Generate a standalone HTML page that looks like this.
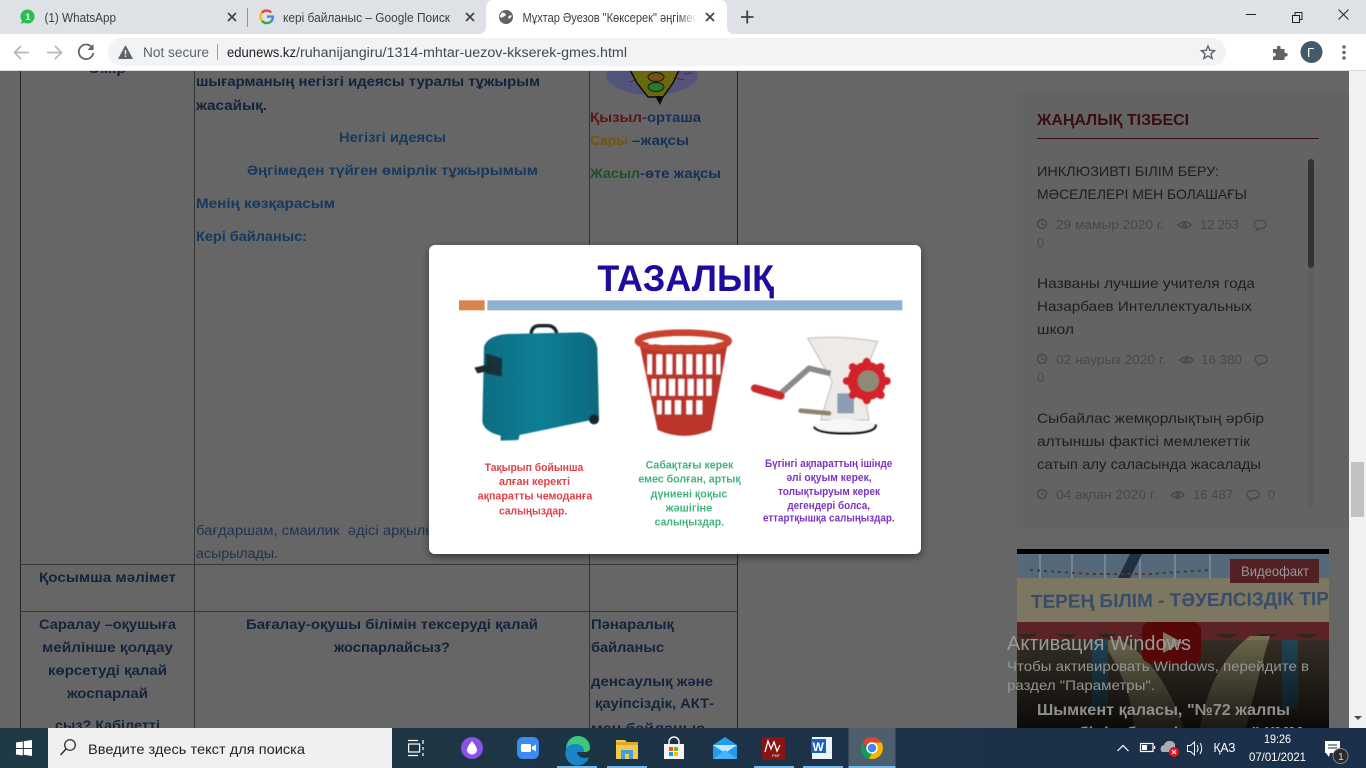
<!DOCTYPE html>
<html><head><meta charset="utf-8"><title>Мұхтар Әуезов</title>
<style>
html,body{margin:0;padding:0;width:1366px;height:768px;overflow:hidden;background:#666}
svg{display:block;position:absolute;left:0;top:0}
text{font-family:"Liberation Sans","DejaVu Sans",sans-serif;white-space:pre}
.b{font-weight:700;font-size:14px}
.r{font-size:14px}
.n{fill:#14233c}.m{fill:#143a60}
.s{font-size:14px;fill:#1e1e1e}
.g{font-size:13px;fill:#484848}
.c{font-size:12.5px;fill:#3c4043}
</style></head><body>
<svg width="1366" height="768" viewBox="0 0 1366 768" xmlns="http://www.w3.org/2000/svg">
<defs>
<linearGradient id="fade" x1="0" x2="1"><stop offset="0" stop-color="#fff" stop-opacity="0"/><stop offset=".8" stop-color="#fff"/></linearGradient>
<linearGradient id="tb" x1="0" x2="1"><stop offset="0" stop-color="#1f3a44"/><stop offset=".5" stop-color="#1d3345"/><stop offset="1" stop-color="#1b2f4b"/></linearGradient>
<linearGradient id="dark" x1="0" x2="0" y1="0" y2="1"><stop offset="0" stop-color="#000" stop-opacity=".1"/><stop offset="1" stop-color="#000" stop-opacity=".8"/></linearGradient>
<linearGradient id="suit" x1="0" x2="1"><stop offset="0" stop-color="#0d6d82"/><stop offset=".5" stop-color="#107f96"/><stop offset="1" stop-color="#0b687d"/></linearGradient>
<filter id="bl"><feGaussianBlur stdDeviation="1.2"/></filter>
<filter id="bt"><feGaussianBlur stdDeviation=".7"/></filter>
<filter id="sh" x="-5%" y="-5%" width="110%" height="115%"><feDropShadow dx="0" dy="3" stdDeviation="4" flood-color="#000" flood-opacity=".45"/></filter>
<clipPath id="vid"><rect x="1017" y="549" width="312" height="179"/></clipPath>
</defs>

<!-- page -->
<rect width="1366" height="768" fill="#666"/>
<g stroke="#222" stroke-width="1">
<path d="M20.5 70V728M737.5 70V728"/>
<path d="M194.5 70V728M589.5 70V728" stroke="#333"/>
<path d="M20 564.5H738M20 611.5H738" stroke="#363636"/>
</g>
<text class="b n" x="88" y="73" textLength="38" lengthAdjust="spacingAndGlyphs">Өмір</text>
<text class="b n" x="196" y="86" textLength="344" lengthAdjust="spacingAndGlyphs">шығарманың негізгі идеясы туралы тұжырым</text>
<text class="b n" x="196" y="110" textLength="71" lengthAdjust="spacingAndGlyphs">жасайық.</text>
<text class="b m" x="339" y="142" textLength="107" lengthAdjust="spacingAndGlyphs">Негізгі идеясы</text>
<text class="b m" x="247" y="175" textLength="291" lengthAdjust="spacingAndGlyphs">Әңгімеден түйген өмірлік тұжырымым</text>
<text class="b m" x="196" y="208" textLength="139" lengthAdjust="spacingAndGlyphs">Менің көзқарасым</text>
<text class="b m" x="196" y="241" textLength="111" lengthAdjust="spacingAndGlyphs">Кері байланыс:</text>
<text class="r" fill="#20344f" x="196" y="535" textLength="240" lengthAdjust="spacingAndGlyphs">бағдаршам, смаилик  әдісі арқылы</text>
<text class="r" fill="#20344f" x="196" y="558" textLength="82" lengthAdjust="spacingAndGlyphs">асырылады.</text>
<text class="b n" x="39" y="582" textLength="137" lengthAdjust="spacingAndGlyphs">Қосымша мәлімет</text>
<text class="b n" x="39" y="629" textLength="137" lengthAdjust="spacingAndGlyphs">Саралау –оқушыға</text>
<text class="b n" x="42" y="652" textLength="131" lengthAdjust="spacingAndGlyphs">мейлінше қолдау</text>
<text class="b n" x="48" y="675" textLength="119" lengthAdjust="spacingAndGlyphs">көрсетуді қалай</text>
<text class="b n" x="67" y="698" textLength="81" lengthAdjust="spacingAndGlyphs">жоспарлай</text>
<text class="b n" x="55" y="730" textLength="105" lengthAdjust="spacingAndGlyphs">сыз? Қабілетті</text>
<text class="b n" x="246" y="629" textLength="292" lengthAdjust="spacingAndGlyphs">Бағалау-оқушы білімін тексеруді қалай</text>
<text class="b n" x="334" y="652" textLength="116" lengthAdjust="spacingAndGlyphs">жоспарлайсыз?</text>
<!-- traffic light -->
<ellipse cx="652" cy="75" rx="46" ry="20" fill="#54547a"/>
<path d="M637 80l-8 2M676 78l8 2M684 74l8-1" stroke="#6a2228" stroke-width="1"/>
<path d="M629 68H680L673 83L663 97H648L637 83Z" fill="#6b6910" stroke="#0c0c0c" stroke-width="1.500"/>
<ellipse cx="656" cy="77" rx="8" ry="4.500" fill="#7a4d10" stroke="#1a1a1a"/>
<ellipse cx="656" cy="87" rx="8" ry="4.500" fill="#25792b" stroke="#1a1a1a"/>
<path d="M655 96H664L660 105Z" fill="#0c0c0c"/>
<text class="b" x="590" y="122" textLength="52" lengthAdjust="spacingAndGlyphs" fill="#5e1414">Қызыл</text>
<text class="b" x="642" y="122" textLength="59" lengthAdjust="spacingAndGlyphs" fill="#14305a">-орташа</text>
<text class="b" x="590" y="145" textLength="38" lengthAdjust="spacingAndGlyphs" fill="#6e560a">Сары</text>
<text class="b" x="632" y="145" textLength="57" lengthAdjust="spacingAndGlyphs" fill="#14305a">–жақсы</text>
<text class="b" x="590" y="178" textLength="50" lengthAdjust="spacingAndGlyphs" fill="#1f5029">Жасыл</text>
<text class="b" x="640" y="178" textLength="81" lengthAdjust="spacingAndGlyphs" fill="#14305a">-өте жақсы</text>
<text class="b n" x="591" y="629" textLength="83" lengthAdjust="spacingAndGlyphs">Пәнаралық</text>
<text class="b n" x="591" y="652" textLength="73" lengthAdjust="spacingAndGlyphs">байланыс</text>
<text class="b n" x="591" y="686" textLength="122" lengthAdjust="spacingAndGlyphs">денсаулық және</text>
<text class="b n" x="595" y="708" textLength="119" lengthAdjust="spacingAndGlyphs">қауіпсіздік, АКТ-</text>
<text class="b n" x="591" y="733" textLength="114" lengthAdjust="spacingAndGlyphs">мен байланыс</text>

<!-- sidebar -->
<rect x="1017" y="93" width="332" height="435" fill="#636363"/>
<text x="1037" y="125" font-size="15.500" font-weight="700" fill="#3a0e10" textLength="152" lengthAdjust="spacingAndGlyphs">ЖАҢАЛЫҚ ТІЗБЕСІ</text>
<rect x="1037" y="138" width="282" height="1" fill="#3a0e10"/>
<rect x="1308" y="159" width="6" height="349" rx="3" fill="#5e5e5e"/>
<rect x="1308" y="159" width="6" height="109" rx="3" fill="#333"/>
<text class="s" x="1037" y="176" textLength="182" lengthAdjust="spacingAndGlyphs">ИНКЛЮЗИВТІ БІЛІМ БЕРУ:</text>
<text class="s" x="1037" y="199" textLength="210" lengthAdjust="spacingAndGlyphs">МӘСЕЛЕЛЕРІ МЕН БОЛАШАҒЫ</text>
<g fill="none" stroke="#484848" stroke-width="1.500">
<circle cx="1042" cy="224" r="4.500"/><path d="M1042 221.500V224.500H1044.500" stroke-width="1"/>
<path d="M1178 225q7-6.500 13 0q-6 6-13 0z"/><circle cx="1184.500" cy="225" r="1.500"/>
<path d="M1254 224.500q0-4 6-4t6 4q0 4-6 4l-3 2v-2.500q-3-1-3-3.500z" stroke-width="1.200"/>
<circle cx="1042" cy="359" r="4.500"/><path d="M1042 356.500V359.500H1044.500" stroke-width="1"/>
<path d="M1180 360q7-6.500 13 0q-6 6-13 0z"/><circle cx="1186.500" cy="360" r="1.500"/>
<path d="M1255 359.500q0-4 6-4t6 4q0 4-6 4l-3 2v-2.500q-3-1-3-3.500z" stroke-width="1.200"/>
<circle cx="1042" cy="494" r="4.500"/><path d="M1042 491.500V494.500H1044.500" stroke-width="1"/>
<path d="M1171 495q7-6.500 13 0q-6 6-13 0z"/><circle cx="1177.500" cy="495" r="1.500"/>
<path d="M1247 494.500q0-4 6-4t6 4q0 4-6 4l-3 2v-2.500q-3-1-3-3.500z" stroke-width="1.200"/>
</g>
<text class="g" x="1056" y="229" textLength="108" lengthAdjust="spacingAndGlyphs">29 мамыр 2020 г.</text>
<text class="g" x="1200" y="229" textLength="39" lengthAdjust="spacingAndGlyphs">12 253</text>
<text class="g" x="1037" y="247">0</text>
<text class="s" x="1037" y="288" textLength="218" lengthAdjust="spacingAndGlyphs">Названы лучшие учителя года</text>
<text class="s" x="1037" y="311" textLength="215" lengthAdjust="spacingAndGlyphs">Назарбаев Интеллектуальных</text>
<text class="s" x="1037" y="334" textLength="37" lengthAdjust="spacingAndGlyphs">школ</text>
<text class="g" x="1056" y="364" textLength="110" lengthAdjust="spacingAndGlyphs">02 наурыз 2020 г.</text>
<text class="g" x="1201" y="364" textLength="41" lengthAdjust="spacingAndGlyphs">16 380</text>
<text class="g" x="1037" y="382">0</text>
<text class="s" x="1037" y="423" textLength="227" lengthAdjust="spacingAndGlyphs">Сыбайлас жемқорлықтың әрбір</text>
<text class="s" x="1037" y="446" textLength="213" lengthAdjust="spacingAndGlyphs">алтыншы фактісі мемлекеттік</text>
<text class="s" x="1037" y="469" textLength="224" lengthAdjust="spacingAndGlyphs">сатып алу саласында жасалады</text>
<text class="g" x="1056" y="499" textLength="101" lengthAdjust="spacingAndGlyphs">04 ақпан 2020 г.</text>
<text class="g" x="1193" y="499" textLength="40" lengthAdjust="spacingAndGlyphs">16 487</text>
<text class="g" x="1268" y="499">0</text>

<!-- video -->
<g clip-path="url(#vid)">
<rect x="1017" y="549" width="312" height="180" fill="#2a2622"/>
<rect x="1017" y="549" width="312" height="5" fill="#000"/>
<rect x="1017" y="554" width="312" height="26" fill="#55697a"/>
<path d="M1040 554V578M1072 554V578M1105 554V578M1140 554V578M1175 554V578M1210 554V578" stroke="#76858e" stroke-width="2"/>
<path d="M1130 554l12 0-12 24h-12z" fill="#222f40"/>
<path d="M1030 570l60 4 60 0 60-4" stroke="#4a3c30" stroke-width="2" fill="none" stroke-dasharray="3 4"/>
<rect x="1017" y="578" width="312" height="44" fill="#7d7762"/>
<text x="1031" y="608" font-size="19" font-weight="700" fill="#364d6b" textLength="298" lengthAdjust="spacingAndGlyphs" transform="rotate(-.6 1031 608)">ТЕРЕҢ БІЛІМ - ТӘУЕЛСІЗДІК ТІР</text>
<rect x="1017" y="622" width="312" height="12" fill="#5c2325"/>
<path d="M1017 634q10 8 20 0t20 0 20 0 20 0 20 0 20 0 20 0 20 0 20 0 20 0 20 0 20 0 20 0 20 0 20 0 20 0v8H1017z" fill="#5c2325"/>
<rect x="1017" y="640" width="312" height="90" fill="#3a3229"/>
<path d="M1120 640q40 20 64 88h-50q-4-50-34-88z" fill="#756e52"/>
<path d="M1250 636q-40 30-50 92h46q14-60 24-92z" fill="#756e52"/>
<rect x="1092" y="640" width="16" height="70" fill="#244c5d"/>
<rect x="1282" y="640" width="16" height="70" fill="#244c5d"/>
<rect x="1017" y="640" width="312" height="90" fill="url(#dark)"/>
<rect x="1142" y="622" width="59" height="41" rx="8" fill="#560707"/>
<path d="M1163 632L1183 642.500L1163 653Z" fill="#7d7762"/>
<rect x="1230" y="559" width="89" height="24" fill="#532024"/>
<text x="1241" y="576" font-size="13.500" fill="#969696" textLength="68" lengthAdjust="spacingAndGlyphs">Видеофакт</text>
<text x="1037" y="715" font-size="16" font-weight="700" fill="#8f8f8f" textLength="253" lengthAdjust="spacingAndGlyphs">Шымкент қаласы, "№72 жалпы</text>
<text x="1078" y="738" font-size="16" font-weight="700" fill="#8f8f8f" textLength="225" lengthAdjust="spacingAndGlyphs">білім беретін мектеп" КММ</text>
</g>
<text x="1007" y="650" font-size="20" fill="#999" textLength="184" lengthAdjust="spacingAndGlyphs">Активация Windows</text>
<text x="1007" y="671" font-size="14" fill="#949494" textLength="302" lengthAdjust="spacingAndGlyphs">Чтобы активировать Windows, перейдите в</text>
<text x="1007" y="690" font-size="14" fill="#949494" textLength="148" lengthAdjust="spacingAndGlyphs">раздел "Параметры".</text>

<!-- page scrollbar -->
<rect x="1349" y="70" width="17" height="658" fill="#f1f1f1"/>
<rect x="1351" y="462" width="13" height="55" fill="#c1c1c1"/>
<path d="M1354 716h8l-4 4z" fill="#505050"/>

<!-- modal -->
<rect x="429" y="245" width="492" height="309" rx="6" fill="#fff" filter="url(#sh)"/>
<g transform="translate(429 245) scale(.33333)">
<text x="505" y="138" font-size="112" font-weight="700" fill="#1a0f9e" textLength="530" lengthAdjust="spacingAndGlyphs" filter="url(#bt)">ТАЗАЛЫҚ</text>
<rect x="90" y="166" width="77" height="30" fill="#d9844b"/>
<rect x="175" y="166" width="1245" height="30" fill="#8fb0d0"/>
<g filter="url(#bl)">
<!-- suitcase -->
<path d="M306 272q0-30 26-30h26q24 2 26 30" fill="none" stroke="#16262c" stroke-width="10"/>
<path d="M165 305Q175 272 235 267L455 262Q498 268 505 310L510 520L272 570L268 585L215 587L215 572Q165 560 160 530Z" fill="url(#suit)"/>
<path d="M170 325L220 340L218 395L170 385Z" fill="#14303a"/>
<path d="M136 368L190 355L195 375L145 385Z" fill="#1c2a30"/>
<circle cx="495" cy="523" r="15" fill="#14262c"/>
<!-- basket -->
<path d="M632 300H895L847 555Q765 590 686 555Z" fill="#bb352c"/>
<g fill="#fff">
<rect x="655" y="328" width="14" height="60"/><rect x="682" y="328" width="18" height="60"/><rect x="712" y="328" width="18" height="60"/><rect x="742" y="328" width="18" height="60"/><rect x="772" y="328" width="18" height="60"/><rect x="802" y="328" width="18" height="60"/><rect x="832" y="328" width="18" height="60"/><rect x="862" y="328" width="12" height="60"/>
<rect x="668" y="402" width="14" height="50"/><rect x="692" y="402" width="18" height="50"/><rect x="720" y="402" width="18" height="50"/><rect x="748" y="402" width="18" height="50"/><rect x="776" y="402" width="18" height="50"/><rect x="804" y="402" width="18" height="50"/><rect x="832" y="402" width="16" height="50"/>
<rect x="684" y="466" width="14" height="42"/><rect x="708" y="466" width="18" height="42"/><rect x="738" y="466" width="18" height="42"/><rect x="772" y="466" width="18" height="42"/><rect x="802" y="466" width="18" height="42"/>
</g>
<ellipse cx="763" cy="288" rx="136" ry="25" fill="none" stroke="#c8432f" stroke-width="20"/>
<g fill="#fff"><rect x="660" y="282" width="16" height="16"/><rect x="694" y="278" width="18" height="20"/><rect x="730" y="276" width="18" height="22"/><rect x="768" y="276" width="18" height="22"/><rect x="806" y="278" width="18" height="20"/><rect x="842" y="282" width="16" height="16"/></g>
<!-- grinder -->
<path d="M1136 280Q1240 270 1346 290L1300 400L1320 525H1175L1210 410Z" fill="#eeeae6" stroke="#bbb" stroke-width="3"/>
<path d="M1155 545Q1200 505 1340 535Q1345 565 1245 565Q1165 565 1155 545Z" fill="#f6f6f6"/>
<path d="M1155 545Q1165 565 1245 565Q1345 565 1340 538" fill="none" stroke="#111" stroke-width="7"/>
<path d="M1115 497L1200 505" stroke="#8c8670" stroke-width="14" stroke-linecap="round"/>
<rect x="1225" y="445" width="50" height="60" fill="#8a9db5"/>
<path d="M1050 450L1140 370L1205 385" fill="none" stroke="#8a8a8a" stroke-width="17"/>
<path d="M978 430L1055 452" stroke="#c92a2a" stroke-width="24" stroke-linecap="round"/>
<circle cx="1313" cy="408" r="58" fill="#d3232b"/>
<g fill="#d3232b"><circle cx="1313" cy="350" r="12"/><circle cx="1355" cy="366" r="12"/><circle cx="1373" cy="408" r="12"/><circle cx="1355" cy="450" r="12"/><circle cx="1313" cy="466" r="12"/><circle cx="1271" cy="450" r="12"/><circle cx="1253" cy="408" r="12"/><circle cx="1271" cy="366" r="12"/></g>
<circle cx="1318" cy="408" r="32" fill="#8d8a78"/>
</g>
<g font-size="34" font-weight="700" filter="url(#bt)">
<g fill="#e0404a">
<text x="167" y="678" textLength="296" lengthAdjust="spacingAndGlyphs">Тақырып бойынша</text>
<text x="210" y="720" textLength="213" lengthAdjust="spacingAndGlyphs">алған керекті</text>
<text x="146" y="764" textLength="344" lengthAdjust="spacingAndGlyphs">ақпаратты чемоданға</text>
<text x="210" y="808" textLength="205" lengthAdjust="spacingAndGlyphs">салыңыздар.</text>
</g>
<g fill="#41b57c">
<text x="650" y="670" textLength="263" lengthAdjust="spacingAndGlyphs">Сабақтағы керек</text>
<text x="628" y="712" textLength="307" lengthAdjust="spacingAndGlyphs">емес болған, артық</text>
<text x="665" y="757" textLength="230" lengthAdjust="spacingAndGlyphs">дүниені қоқыс</text>
<text x="710" y="800" textLength="140" lengthAdjust="spacingAndGlyphs">жәшігіне</text>
<text x="677" y="842" textLength="208" lengthAdjust="spacingAndGlyphs">салыңыздар.</text>
</g>
<g fill="#7d35c4">
<text x="1008" y="666" textLength="382" lengthAdjust="spacingAndGlyphs">Бүгінгі ақпараттың ішінде</text>
<text x="1072" y="708" textLength="256" lengthAdjust="spacingAndGlyphs">әлі оқуым керек,</text>
<text x="1047" y="750" textLength="306" lengthAdjust="spacingAndGlyphs">толықтыруым керек</text>
<text x="1075" y="792" textLength="248" lengthAdjust="spacingAndGlyphs">дегендері болса,</text>
<text x="1002" y="830" textLength="395" lengthAdjust="spacingAndGlyphs">еттартқышқа салыңыздар.</text>
</g>
</g>
</g>

<!-- chrome -->
<rect width="1366" height="34" fill="#dee1e6"/>
<rect y="34" width="1366" height="36" fill="#fff"/>
<rect y="70" width="1366" height="1" fill="#dadce0"/>
<path d="M478 34q8 0 8-8V8q0-8 8-8H719q8 0 8 8V26q0 8 8 8Z" fill="#fff"/>
<!-- whatsapp -->
<circle cx="27.500" cy="16.500" r="7" fill="#25c04e"/><path d="M21 24l1.500-5 3 3z" fill="#25c04e"/>
<text x="25.300" y="20" font-size="9.500" font-weight="700" fill="#fff">1</text>
<text class="c" x="44.500" y="22" textLength="71.500" lengthAdjust="spacingAndGlyphs">(1) WhatsApp</text>
<path d="M228 13l8 8M236 13l-8 8" stroke="#3c4043" stroke-width="1.600"/>
<rect x="247" y="8" width="1" height="19" fill="#8e9298"/>
<!-- google -->
<g fill="none" stroke-width="2.400">
<path d="M271.200 12.600a6.300 6.300 0 0 0-9.300 .1" stroke="#ea4335"/>
<path d="M261.900 12.700a6.300 6.300 0 0 0 0 8" stroke="#fbbc05"/>
<path d="M261.900 20.700a6.300 6.300 0 0 0 9.600 .3" stroke="#34a853"/>
<path d="M271.500 21a6.300 6.300 0 0 0 1.300-4.400H267" stroke="#4285f4"/>
</g>
<text class="c" x="283" y="22" textLength="167" lengthAdjust="spacingAndGlyphs">кері байланыс – Google Поиск</text>
<path d="M466 13l8 8M474 13l-8 8" stroke="#3c4043" stroke-width="1.600"/>
<!-- globe -->
<circle cx="506" cy="17" r="7" fill="#5f6368"/>
<path d="M502 12.500q2.500 0 3.500 1.500t-1.500 2.500-2 1.500-2.500-1.500M509 19q-1.500-1.500 0-3t3 0" fill="#fff"/>
<text class="c" x="522.500" y="22" textLength="178" lengthAdjust="spacingAndGlyphs">Мұхтар Әуезов "Көксерек" әңгімесі</text>
<rect x="678" y="6" width="24" height="22" fill="url(#fade)"/>
<path d="M706 13l8 8M714 13l-8 8" stroke="#3c4043" stroke-width="1.600"/>
<path d="M741 17h12.500M747.250 10.500v13" stroke="#3c4043" stroke-width="1.800"/>
<!-- window controls -->
<rect x="1246" y="14" width="10" height="1" fill="#222"/>
<path d="M1292.500 15.500h7v7h-7zM1295 15.500v-3h7v7h-2.500" fill="none" stroke="#222" stroke-width="1"/>
<path d="M1338.500 9.500l10 10M1348.500 9.500l-10 10" stroke="#222" stroke-width="1"/>
<!-- toolbar -->
<g fill="none" stroke="#b5b7bb" stroke-width="1.700">
<path d="M29 52.500H15M21 46l-6.500 6.500L21 59"/>
<path d="M47 52.500H61M55 46l6.500 6.500L55 59"/>
</g>
<path d="M92 47.500A7.300 7.300 0 1 0 93.300 53" fill="none" stroke="#5f6368" stroke-width="1.800"/>
<path d="M93.500 44v6h-6z" fill="#5f6368"/>
<rect x="108" y="38" width="1118" height="28" rx="14" fill="#f1f3f4"/>
<path d="M125.500 45L133 59H118Z" fill="#5f6368"/>
<rect x="124.800" y="50" width="1.400" height="4.500" fill="#f1f3f4"/><rect x="124.800" y="55.500" width="1.400" height="1.500" fill="#f1f3f4"/>
<text x="143" y="57" font-size="13.500" fill="#5f6368" textLength="66" lengthAdjust="spacingAndGlyphs">Not secure</text>
<rect x="217" y="44" width="1" height="16" fill="#9aa0a6"/>
<text x="227" y="57" font-size="13.500" fill="#202124" textLength="69" lengthAdjust="spacingAndGlyphs">edunews.kz</text>
<text x="296" y="57" font-size="13.500" fill="#44484c" textLength="331" lengthAdjust="spacingAndGlyphs">/ruhanijangiru/1314-mhtar-uezov-kkserek-gmes.html</text>
<path d="M1208 46l1.900 4.300 4.700.4-3.600 3.100 1.100 4.600-4.100-2.500-4.100 2.500 1.100-4.600-3.600-3.100 4.700-.4Z" fill="none" stroke="#5f6368" stroke-width="1.400"/>
<path d="M1273 49h4v-1.500a1.800 1.800 0 0 1 3.600 0V49h4v4h1.300a1.800 1.800 0 0 1 0 3.600H1284.600v3.400H1273v-3.500h1.300a1.900 1.900 0 0 0 0-3.700H1273Z" fill="#5f6368"/>
<circle cx="1311.500" cy="52" r="11" fill="#435a68"/>
<text x="1307" y="57" font-size="13" fill="#fff">Г</text>
<g fill="#5f6368"><circle cx="1344" cy="47" r="1.700"/><circle cx="1344" cy="52.500" r="1.700"/><circle cx="1344" cy="58" r="1.700"/></g>

<!-- taskbar -->
<rect y="728" width="1366" height="40" fill="url(#tb)"/>
<path d="M16 742.500l6.800-1V748H16ZM23.800 741.300L32 740V748H23.800ZM16 749h6.800v6.500l-6.800-1ZM23.800 749H32v7l-8.200-1.200Z" fill="#fff"/>
<rect x="48" y="728" width="344" height="40" fill="#f0f0f0"/>
<circle cx="70" cy="745" r="5.300" fill="none" stroke="#222" stroke-width="1.200"/>
<path d="M66 749l-5.500 6" stroke="#222" stroke-width="1.300"/>
<text x="88" y="754" font-size="14" fill="#222" textLength="217" lengthAdjust="spacingAndGlyphs">Введите здесь текст для поиска</text>
<g fill="none" stroke="#fff" stroke-width="1.200">
<path d="M408 740.500h10M408 755.500h10"/><rect x="408.600" y="744" width="11" height="8"/><path d="M423 740v4M423 747v3M423 753v3"/>
</g>
<circle cx="472" cy="748" r="11" fill="#8a52e8"/>
<path d="M472 741q5 6 5 9a5 4.500 0 0 1-10 0q0-3 5-9z" fill="#fff"/>
<rect x="517" y="737" width="22" height="22" rx="6" fill="#3d8bf2"/>
<rect x="521" y="744" width="10" height="8" rx="1.500" fill="#fff"/><path d="M532 747l4-2.500v7L532 749z" fill="#fff"/>
<path d="M578 736a12 12 0 0 1 12 12c0 3-2.500 4-6 4h-7c0 3 3 6 8 6 2 0 4-.6 4-.6a12 12 0 0 1-23-8A12 12 0 0 1 578 736z" fill="#1a84c9"/>
<path d="M578 736a12 12 0 0 1 12 12c0 3-2.500 4-6 4 1-5-4-8-9-8-4 0-7 2-8.500 4A12 12 0 0 1 578 736z" fill="#3cc97a"/>
<path d="M616 740h9l2 2.500h11V759h-22z" fill="#f2c94c"/><rect x="616" y="742" width="22" height="3" fill="#e0a92e"/>
<rect x="621" y="750" width="12" height="9" fill="#3f9fe0"/><rect x="625" y="754" width="4" height="5" fill="#f2c94c"/>
<path d="M664 744h20v15h-20z" fill="#f5f5f5"/><path d="M669 744v-2a5 5 0 0 1 10 0v2" fill="none" stroke="#f5f5f5" stroke-width="1.500"/>
<rect x="669" y="747" width="4" height="4" fill="#f25022"/><rect x="674" y="747" width="4" height="4" fill="#7fba00"/><rect x="669" y="752" width="4" height="4" fill="#00a4ef"/><rect x="674" y="752" width="4" height="4" fill="#ffb900"/>
<path d="M713 745L725 737L737 745V759H713Z" fill="#1f9cf0"/><path d="M713 745l12 8 12-8" fill="#c6e7ff"/><path d="M713 759l12-9 12 9z" fill="#47b2f5"/>
<rect x="762" y="737" width="23" height="23" fill="#8a1414"/>
<path d="M765 752l3-11 3 8 3-7 3 9 3-6" fill="none" stroke="#fff" stroke-width="1.300"/>
<text x="772" y="757" font-size="4" fill="#fff">PDF</text>
<rect x="812" y="737" width="20" height="22" fill="#eef3fb"/><rect x="811" y="739" width="15" height="14" fill="#1d5fbd"/>
<text x="812.500" y="751" font-size="12" font-weight="700" fill="#fff">W</text>
<rect x="848.500" y="728" width="47" height="40" fill="#4d5f6c"/>
<path d="M872 737a11 11 0 0 1 9.500 5.500H872a5.500 5.500 0 0 0-5.300 3.800L862.500 742.500A11 11 0 0 1 872 737Z" fill="#db4437"/>
<path d="M862.500 742.500L867 750.500a5.500 5.500 0 0 0 6.200 2.900L869 759A11 11 0 0 1 862.500 742.500Z" fill="#0f9d58"/>
<path d="M881.500 742.500A11 11 0 0 1 869 758.600L874 750a5.500 5.500 0 0 0 0-7.500Z" fill="#f4b400"/>
<circle cx="872" cy="748" r="5.700" fill="#fff"/><circle cx="872" cy="748" r="4.300" fill="#4285f4"/>
<g fill="#76b9ed">
<rect x="557" y="766" width="40" height="2"/><rect x="607" y="766" width="40" height="2"/><rect x="754" y="766" width="40" height="2"/><rect x="803" y="766" width="40" height="2"/><rect x="848.500" y="766" width="47" height="2"/>
</g>
<!-- tray -->
<path d="M1117.500 751l5.500-5.500 5.500 5.500" fill="none" stroke="#fff" stroke-width="1.200"/>
<rect x="1140.500" y="743.500" width="12.500" height="8" fill="none" stroke="#fff" stroke-width="1.200"/><rect x="1142" y="745" width="5" height="5" fill="#fff"/><rect x="1154" y="746" width="1.200" height="3" fill="#fff"/>
<path d="M1162 752a4 4 0 0 1 2-7 6 6 0 0 1 11-1v8z" fill="#a9adb1"/>
<circle cx="1174" cy="752" r="5" fill="#e81123"/><path d="M1172 750l4 4M1176 750l-4 4" stroke="#fff" stroke-width="1"/>
<path d="M1187.500 745.500h3l4-3.500v13l-4-3.500h-3zM1197 745q2 3.500 0 7M1200 743q3.500 5.500 0 11" fill="none" stroke="#fff" stroke-width="1"/>
<text x="1213.500" y="752" font-size="12.500" fill="#fff" textLength="22" lengthAdjust="spacingAndGlyphs">ҚАЗ</text>
<text x="1264" y="743" font-size="12" fill="#fff" textLength="27" lengthAdjust="spacingAndGlyphs">19:26</text>
<text x="1249" y="761" font-size="12" fill="#fff" textLength="57" lengthAdjust="spacingAndGlyphs">07/01/2021</text>
<path d="M1325 741h15v12h-10l-1 4-3-4h-1z" fill="#fff"/>
<path d="M1328 745h9M1328 748h9" stroke="#1b2f4b" stroke-width="1"/>
<circle cx="1340.500" cy="756" r="7.500" fill="#2a2a2a" stroke="#888" stroke-width="1"/>
<text x="1338" y="760" font-size="10.500" fill="#ddd">1</text>
</svg>
</body></html>
